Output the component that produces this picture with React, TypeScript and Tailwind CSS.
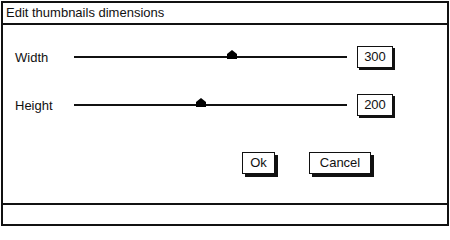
import React from "react"

function Thumb({ left }: { left: string }) {
  return (
    <svg className={`absolute top-[-6px] ${left}`} width="10" height="9" viewBox="0 0 10 9">
      <polygon points="5,0 10,4 10,9 0,9 0,4" fill="#000" />
    </svg>
  )
}

function SliderRow({ label, value, thumb }: { label: string; value: string; thumb: string }) {
  return (
    <div className="flex items-center h-[24px] pl-[12px]">
      <span className="w-[59px] text-[13px] leading-none text-[#111]">{label}</span>
      <div className="relative w-[273px] h-[2px] bg-[#111]">
        <Thumb left={thumb} />
      </div>
      <div className="ml-[10px] w-[36px] h-[22px] border-[1.5px] border-[#111] shadow-[2px_2px_0_#111] flex items-center justify-center text-[13px] text-[#111]">
        {value}
      </div>
    </div>
  )
}

export default function App() {
  return (
    <div className="w-[450px] h-[227px] bg-white p-px" style={{ fontFamily: '"Liberation Sans", Arial, sans-serif' }}>
      <div className="h-[225px] w-[448px] border-2 border-[#111] flex flex-col">
        {/* Title */}
        <div className="h-[22px] border-b-2 border-[#111] flex items-center pl-[3px] text-[13px] text-[#111]">
          Edit thumbnails dimensions
        </div>

        {/* Body */}
        <div className="flex-1 pt-[20px] flex flex-col">
          <SliderRow label="Width" value="300" thumb="left-[153px]" />
          <div className="h-[24px]" />
          <SliderRow label="Height" value="200" thumb="left-[122px]" />
          <div className="flex pl-[239px] pt-[35px] gap-[34px]">
            <button className="w-[33px] h-[22px] border-[1.5px] border-[#111] shadow-[3px_3px_0_#111] bg-white text-[13px] text-[#111] flex items-center justify-center">
              Ok
            </button>
            <button className="w-[62px] h-[22px] border-[1.5px] border-[#111] shadow-[3px_3px_0_#111] bg-white text-[13px] text-[#111] flex items-center justify-center">
              Cancel
            </button>
          </div>
        </div>

        {/* Status bar */}
        <div className="h-[21px] border-t-2 border-[#111]" />
      </div>
    </div>
  )
}
